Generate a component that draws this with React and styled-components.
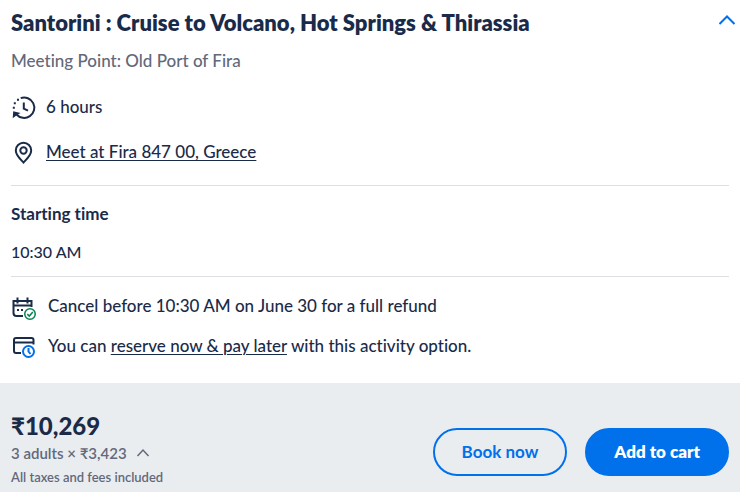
import React from 'react';
import styled, { createGlobalStyle } from 'styled-components';

const GlobalStyle = createGlobalStyle`
  * { box-sizing: border-box; }
  body {
    margin: 0;
    background: #fff;
    color: #1a2b49;
    font-family: Lato, "Noto Sans", sans-serif;
    font-size: 17px;
    font-weight: 500;
    font-variant-ligatures: none;
    line-height: 24px;
  }
`;

const Card = styled.main`
  display: flex;
  flex-direction: column;
`;

const Details = styled.div`
  display: flex;
  flex-direction: column;
  padding: 8px 11px 23px;
`;

const Header = styled.header`
  display: flex;
  justify-content: space-between;
  gap: 16px;
`;

const Title = styled.h1`
  margin: 0;
  font-size: 22px;
  font-weight: 800;
  line-height: 30px;
`;

const ToggleButton = styled.button`
  display: flex;
  width: 24px;
  height: 24px;
  margin-right: -10px;
  padding: 0;
  align-items: center;
  justify-content: center;
  border: 0;
  background: none;
  color: ${({ $muted }) => ($muted ? '#63687a' : '#0071eb')};
  cursor: pointer;
`;

const Subtitle = styled.p`
  margin: 11px 0 22px;
  color: #63687a;
`;

const Facts = styled.ul`
  display: flex;
  flex-direction: column;
  gap: ${({ $gap }) => $gap}px;
  margin: 0;
  padding: 0;
  list-style: none;
`;

const Fact = styled.li`
  display: flex;
  gap: ${({ $gap }) => $gap}px;
`;

const Icon = styled.svg`
  flex: none;
  width: 26px;
  height: 26px;
  fill: none;
  stroke: currentColor;
  stroke-width: 2;
`;

const TextLink = styled.a`
  color: inherit;
  text-decoration: underline;
  text-decoration-thickness: 1px;
  text-underline-offset: 2px;
`;

const Divider = styled.hr`
  width: 100%;
  height: 1px;
  margin: ${({ $top }) => $top}px 0 ${({ $bottom }) => $bottom}px;
  border: 0;
  background: #dcdfe4;
`;

const SectionTitle = styled.h2`
  margin: 0;
  font-size: 17px;
  font-weight: 700;
  line-height: 24px;
`;

const Time = styled.p`
  margin: 14px 0 0;
  font-size: 16px;
`;

const Footer = styled.footer`
  display: flex;
  align-items: center;
  justify-content: space-between;
  gap: 16px;
  padding: 28px 11px 4px;
  background: #e9edf0;
`;

const Price = styled.div`
  display: flex;
  flex-direction: column;
  color: #63687a;
`;

const Total = styled.strong`
  color: #1a2b49;
  font-size: 24px;
  font-weight: 900;
  line-height: 30px;
`;

const Breakdown = styled.div`
  display: flex;
  align-items: center;
  gap: 4px;
  font-size: 15px;
  font-weight: 600;
`;

const Tax = styled.span`
  font-size: 13px;
  font-weight: 600;
`;

const Actions = styled.div`
  display: flex;
  gap: 18px;
  padding-top: 4px;
`;

const ActionButton = styled.button`
  height: 48px;
  padding: 0 27px 2px;
  border: 2px solid #0071eb;
  border-radius: 24px;
  background: ${({ $primary }) => ($primary ? '#0071eb' : 'transparent')};
  color: ${({ $primary }) => ($primary ? '#fff' : '#0071eb')};
  font-family: inherit;
  font-size: 17px;
  font-weight: ${({ $primary }) => ($primary ? 800 : 700)};
  cursor: pointer;
`;

export default function App() {
  return (
    <>
      <GlobalStyle />
      <Card>
        <Details>
          <Header>
            <Title>Santorini : Cruise to Volcano, Hot Springs &amp; Thirassia</Title>
            <ToggleButton type="button" aria-label="Collapse details" aria-expanded="true">
              <svg width="18" height="12" viewBox="0 0 18 12" fill="none" stroke="currentColor" strokeWidth="2">
                <path d="M1.5 10 9 2.5l7.5 7.5" />
              </svg>
            </ToggleButton>
          </Header>
          <Subtitle>Meeting Point: Old Port of Fira</Subtitle>
          <Facts $gap={19}>
            <Fact $gap={9}>
              <Icon viewBox="0 0 26 26" aria-hidden="true">
                <path d="M9.7 3.1A10.200 10.200 0 1 1 5.500 19.500" />
                <path d="M12.800 7.500v6.200l4.200 2" />
                <path d="m2.200 16.200 7.300 1.800-3.500 2-4.300 3.200Z" fill="currentColor" stroke="none" />
                <path d="M6 4.700h2M2.800 8.300h2M1.800 12.700h2" />
              </Icon>
              <span>6 hours</span>
            </Fact>
            <Fact $gap={9}>
              <Icon viewBox="0 0 26 26" aria-hidden="true">
                <path d="M12.500 22.500c-2.800-3-7.700-7.200-7.700-12a7.700 7.700 0 0 1 15.400 0c0 4.800-4.900 9-7.700 12Z" />
                <circle cx="12.500" cy="10.500" r="3.200" />
              </Icon>
              <TextLink href="#meeting-point">Meet at Fira 847 00, Greece</TextLink>
            </Fact>
          </Facts>
          <Divider $top={19} $bottom={16} />
          <SectionTitle>Starting time</SectionTitle>
          <Time>10:30 AM</Time>
          <Divider $top={12} $bottom={17} />
          <Facts $gap={14}>
            <Fact $gap={11}>
              <Icon viewBox="0 0 26 26" aria-hidden="true">
                <path d="M12 22H5.500a3 3 0 0 1-3-3V7h18v6M2.500 11.500h18M6.500 3.500v6M16.500 3.500v6" />
                <path d="M6 16h2M10 16h2" />
                <circle cx="19" cy="20" r="5.250" stroke="#078050" strokeWidth="1.500" />
                <path d="m16.300 20.100 2 2 3.500-4" stroke="#078050" strokeWidth="1.500" />
              </Icon>
              <span>Cancel before 10:30 AM on June 30 for a full refund</span>
            </Fact>
            <Fact $gap={11}>
              <Icon viewBox="0 0 26 26" aria-hidden="true">
                <path d="M10 19H5a2 2 0 0 1-2-2V6a2 2 0 0 1 2-2h15.500a2 2 0 0 1 2 2v4.500M3 8.500h19.500" />
                <circle cx="17.500" cy="17.500" r="5.500" stroke="#0071eb" />
                <path d="M17.500 14v3.500l2 2.500" stroke="#0071eb" />
              </Icon>
              <span>
                You can <TextLink href="#pay-later">reserve now &amp; pay later</TextLink> with this activity option.
              </span>
            </Fact>
          </Facts>
        </Details>
        <Footer>
          <Price>
            <Total>₹10,269</Total>
            <Breakdown>
              <span>3 adults × ₹3,423</span>
              <ToggleButton $muted type="button" aria-label="Show price breakdown">
                <svg width="14" height="10" viewBox="0 0 14 10" fill="none" stroke="currentColor" strokeWidth="1.500">
                  <path d="m1.500 8 5.500-6 5.500 6" />
                </svg>
              </ToggleButton>
            </Breakdown>
            <Tax>All taxes and fees included</Tax>
          </Price>
          <Actions>
            <ActionButton type="button">Book now</ActionButton>
            <ActionButton $primary type="button">Add to cart</ActionButton>
          </Actions>
        </Footer>
      </Card>
    </>
  );
}
